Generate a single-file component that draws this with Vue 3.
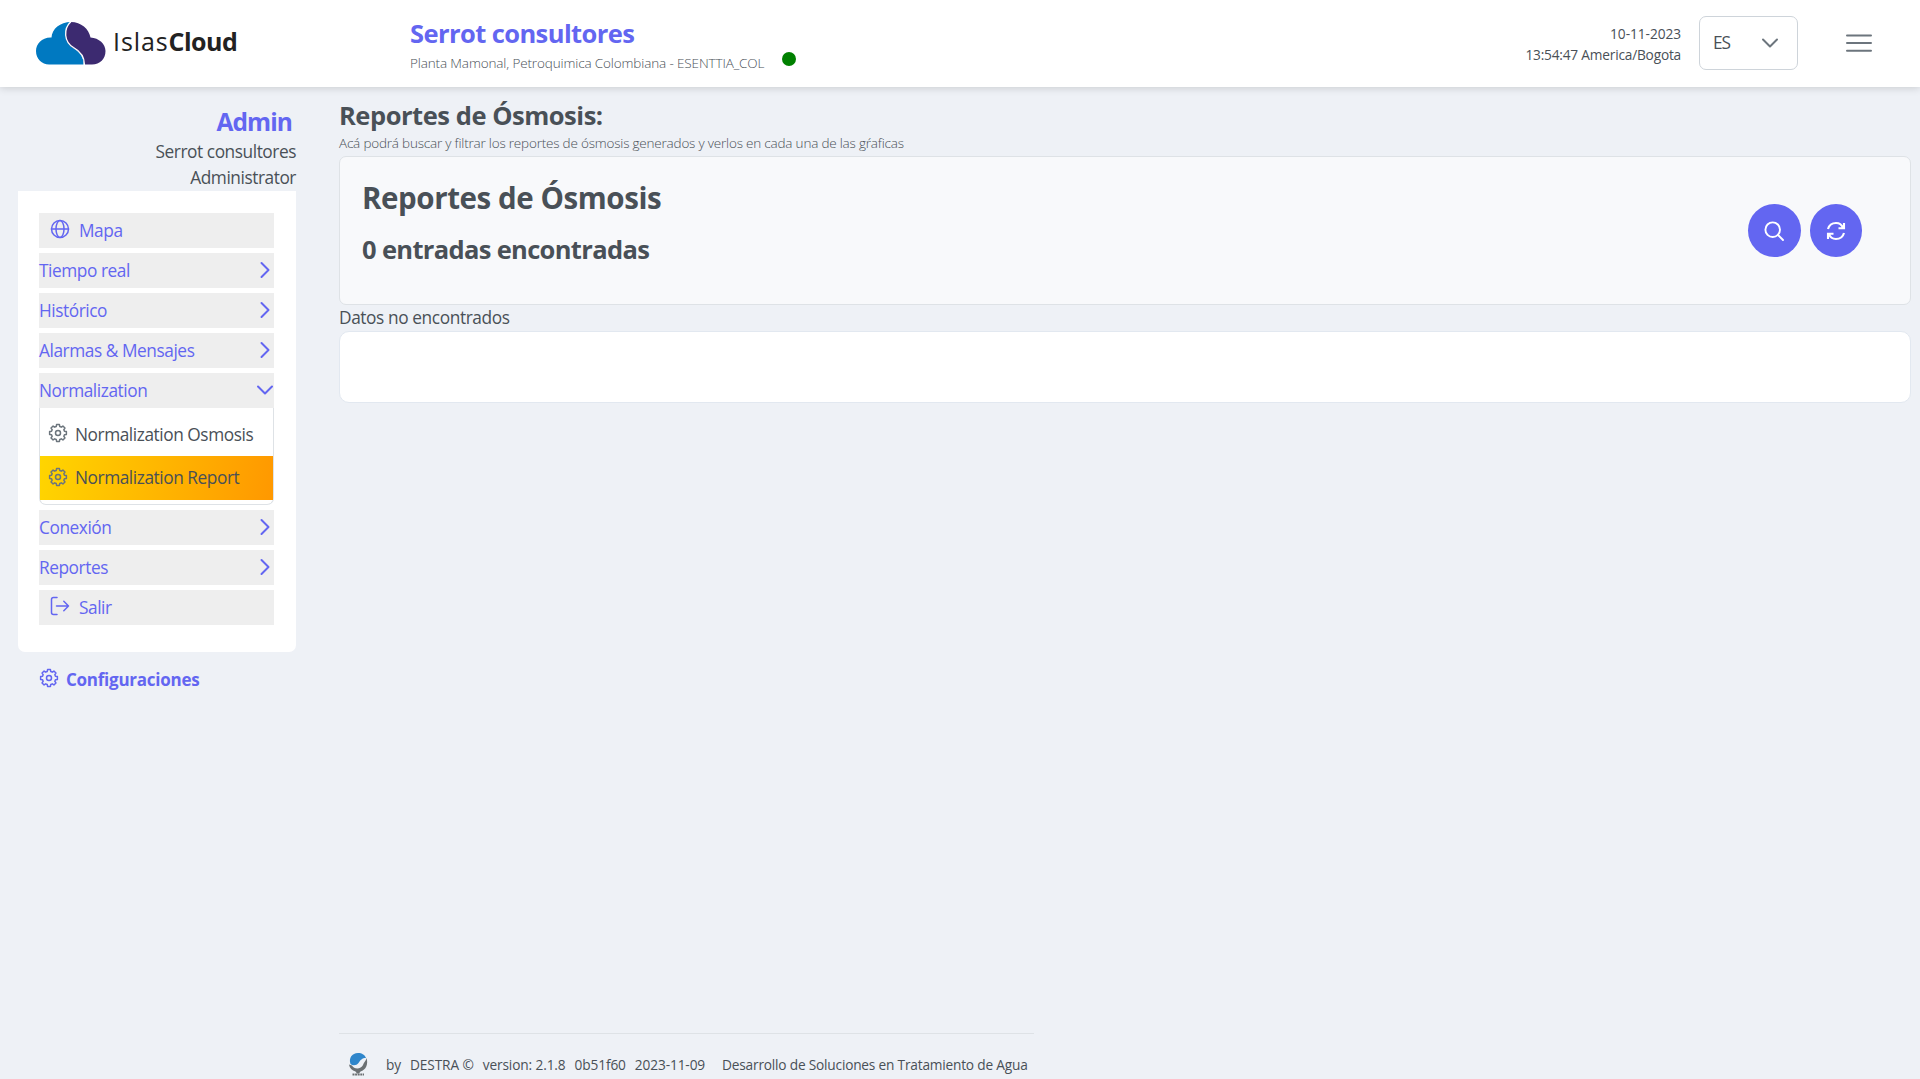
<script setup>
const top = [
  { label: 'Mapa', icon: 'globe' },
  { label: 'Tiempo real' },
  { label: 'Histórico' },
  { label: 'Alarmas & Mensajes' },
  {
    label: 'Normalization',
    open: true,
    children: [
      { label: 'Normalization Osmosis' },
      { label: 'Normalization Report', active: true }
    ]
  },
  { label: 'Conexión' },
  { label: 'Reportes' },
  { label: 'Salir', icon: 'exit' }
]

// Outline of an eight-toothed gear centred in a 20x20 box
const gear = (() => {
  const pts = []
  for (let i = 0; i < 8; i++) {
    const a = (i * Math.PI) / 4
    for (const [d, r] of [[-0.27, 6.7], [-0.17, 8.5], [0.17, 8.5], [0.27, 6.7]]) {
      pts.push(`${(10 + r * Math.sin(a + d)).toFixed(2)} ${(10 - r * Math.cos(a + d)).toFixed(2)}`)
    }
  }
  return `M${pts.join('L')}Z`
})()
</script>

<template>
  <div class="page">
    <header class="topbar">
      <div class="logo">
        <svg width="72" height="46" viewBox="0 0 72 46">
          <path fill="#0079c1" d="M36 2C25 2 17 9 16.500 17.500C7 17 1 24 1 31C1 39 7 44.500 14 44.500H48.500C49 36 43 31 38 28C32 24 27 12 36 2Z" />
          <path fill="#3c2a70" d="M36 2C46 2 54 9 55.500 17.500C64 18 70.500 24 70.500 31C70.500 39 65 44.500 57 44.500H49C49 36 44 31 38 28C29 23 28 9 36 2Z" />
          <path fill="none" stroke="#fff" stroke-width="1.300" d="M36 1.500C28 9 29 22 38.500 27.500C45 31 49.500 36 49.500 45" />
        </svg>
        <span class="logo-text"><span>Islas</span><b>Cloud</b></span>
      </div>
      <div class="company">
        <h1>Serrot consultores</h1>
        <div class="plant">
          <span>Planta Mamonal, Petroquimica Colombiana - ESENTTIA_COL</span>
          <i class="status"></i>
        </div>
      </div>
      <div class="clock">
        <div class="day">10-11-2023</div>
        <div>13:54:47 America/Bogota</div>
      </div>
      <div class="select">
        <span>ES</span>
        <svg width="18" height="18" viewBox="0 0 18 18"><path d="M2 5.500L9 12.500L16 5.500" /></svg>
      </div>
      <svg class="burger" width="28" height="20" viewBox="0 0 28 20"><path d="M2 2.500H26M2 10H26M2 17.700H26" /></svg>
    </header>

    <div class="body">
      <aside>
        <div class="user">
          <h2>Admin</h2>
          <div>Serrot consultores</div>
          <div>Administrator</div>
        </div>
        <nav>
          <div v-for="item in top" :key="item.label" class="group">
            <div class="item" :class="{ link: item.icon }">
              <svg v-if="item.icon === 'globe'" width="20" height="20" viewBox="0 0 20 20">
                <circle cx="10" cy="10" r="8.500" /><ellipse cx="10" cy="10" rx="4" ry="8.500" /><path d="M1.500 10H18.500" />
              </svg>
              <svg v-if="item.icon === 'exit'" width="20" height="20" viewBox="0 0 20 20">
                <path d="M7 1.500H3.500Q1.500 1.500 1.500 3.500V16.500Q1.500 18.500 3.500 18.500H7M6.500 10H18.500M13.800 5.300L18.500 10L13.800 14.700" />
              </svg>
              <span>{{ item.label }}</span>
              <svg v-if="!item.icon" class="chevron" width="18" height="18" viewBox="0 0 18 18">
                <path :d="item.open ? 'M2 5.500L9 12.500L16 5.500' : 'M5.500 2L12.500 9L5.500 16'" />
              </svg>
            </div>
            <div v-if="item.children" class="submenu">
              <div v-for="c in item.children" :key="c.label" class="sub" :class="{ active: c.active }">
                <svg width="20" height="20" viewBox="0 0 20 20"><path :d="gear" /><circle cx="10" cy="10" r="2.500" /></svg>
                <span>{{ c.label }}</span>
              </div>
            </div>
          </div>
        </nav>
        <div class="config">
          <svg width="20" height="20" viewBox="0 0 20 20"><path :d="gear" /><circle cx="10" cy="10" r="2.500" /></svg>
          <span>Configuraciones</span>
        </div>
      </aside>

      <main>
        <h2 class="title">Reportes de Ósmosis:</h2>
        <p class="subtitle">Acá podrá buscar y filtrar los reportes de ósmosis generados y verlos en cada una de las gŕaficas</p>
        <section class="toolbar">
          <div>
            <h2>Reportes de Ósmosis</h2>
            <h3>0 entradas encontradas</h3>
          </div>
          <div class="actions">
            <button>
              <svg width="20" height="20" viewBox="0 0 20 20"><circle cx="8.700" cy="8.700" r="7.300" /><path d="M14 14L19 19" /></svg>
            </button>
            <button>
              <svg class="refresh" width="20" height="20" viewBox="0 0 20 20">
                <path d="M2 8C3 4.500 6 2 10 2C13.500 2 16 4 17 7M18 2V7.300H12.500M18 12C17 15.500 14 18 10 18C6.500 18 4 16 3 13M2 18V12.700H7.500" />
              </svg>
            </button>
          </div>
        </section>
        <p class="empty">Datos no encontrados</p>
        <section class="results"></section>

        <footer>
          <svg width="22" height="25" viewBox="0 0 22 25">
            <path fill="#6b7073" d="M19.500 6C21.500 12 19 18 13.500 19.500L12 21.500H10L8.500 19.500C5 18.500 2.500 16 2 12.500L5 13.500C7 17.500 14 17.500 16 13C17 10 19 9 19.500 6Z" />
            <path fill="#2f86cb" d="M3.500 12C1.500 6 5 1 11 1C15 1 18 3 19 6C15 6 13.500 8 11.500 11C9.500 13.500 6 14 3.500 12Z" />
            <path class="mark" d="M5.500 22.500H17" />
          </svg>
          <span class="by">by</span>
          <span class="destra">DESTRA ©</span>
          <span class="version">version: 2.1.8</span>
          <span class="hash">0b51f60</span>
          <span class="date">2023-11-09</span>
          <span class="tagline">Desarrollo de Soluciones en Tratamiento de Agua</span>
        </footer>
      </main>
    </div>
  </div>
</template>

<style>
body {
  background: #eef1f6;
}
</style>

<style scoped>
* {
  box-sizing: border-box;
}
h1, h2, h3, p {
  margin: 0;
}
.page {
  display: flex;
  flex-direction: column;
  height: 1079px;
  overflow: hidden;
  background: #eef1f6;
  color: #495057;
  font: 400 17.3px/26px "Open Sans", "Noto Sans", sans-serif;
  letter-spacing: -0.44px;
}
svg {
  flex: none;
  fill: none;
  stroke: currentColor;
  stroke-width: 1.5;
  stroke-linecap: round;
  stroke-linejoin: round;
}
.topbar {
  position: relative;
  flex: none;
  display: flex;
  align-items: center;
  height: 87px;
  padding: 0 47px 1px 35px;
  background: #fff;
  box-shadow: 0 1px 8px rgba(0, 0, 0, 0.16);
}
.logo {
  display: flex;
  align-items: center;
  width: 375px;
}
.logo svg {
  stroke: none;
}
.logo-text {
  margin: -4px 0 0 6px;
  color: #222;
  font-size: 25px;
  line-height: 34px;
}
.logo-text span {
  letter-spacing: 0.9px;
}
.logo-text b {
  letter-spacing: -0.5px;
}
.company {
  padding-top: 4px;
}
h1 {
  color: #6366f1;
  font-size: 25.5px;
  line-height: 34px;
  font-weight: 700;
  letter-spacing: -0.58px;
}
.plant {
  display: flex;
  font-size: 13.5px;
  line-height: 22px;
  font-weight: 300;
  letter-spacing: -0.13px;
  padding-top: 2px;
}
.status {
  width: 14px;
  height: 14px;
  margin-left: 18px;
  border-radius: 50%;
  background: #008000;
}
.clock {
  margin-left: auto;
  padding-top: 2px;
  text-align: right;
  font-size: 13.7px;
  line-height: 21px;
  letter-spacing: -0.2px;
}
.day {
  letter-spacing: -0.05px;
}
.select {
  display: flex;
  align-items: center;
  justify-content: space-between;
  width: 99px;
  height: 54px;
  margin-left: 18px;
  padding: 0 18px 0 13px;
  border: 1px solid #ced4da;
  border-radius: 7px;
}
.select span {
  letter-spacing: -1px;
}
.select svg,
.burger {
  color: #6c757d;
  stroke-width: 2;
}
.burger {
  margin-left: 47px;
}
.body {
  flex: 1;
  display: flex;
  min-height: 0;
}
aside {
  width: 339px;
  padding: 17px 43px 0 18px;
}
.user {
  text-align: right;
  height: 87px;
}
.user h2 {
  padding-right: 4px;
  color: #6366f1;
  font-size: 24.5px;
  line-height: 35px;
  font-weight: 700;
  letter-spacing: -0.9px;
}
nav {
  display: flex;
  flex-direction: column;
  gap: 5px;
  height: 461px;
  padding: 22px 22px 0 21px;
  background: #fff;
  border-radius: 0 0 7px 7px;
}
.item {
  display: flex;
  align-items: center;
  justify-content: space-between;
  height: 35px;
  background: #eee;
  color: #6366f1;
}
.item.link {
  justify-content: flex-start;
  gap: 9px;
  padding-left: 11px;
}
.item .chevron {
  stroke-width: 2;
  margin-top: -2px;
}
.item svg {
  margin-top: -3px;
}
.submenu {
  padding: 4.500px 0 4.500px;
  border: 1px solid #dee2e6;
  border-top: 0;
  border-radius: 0 0 7px 7px;
}
.sub {
  display: flex;
  align-items: center;
  gap: 7px;
  height: 43.500px;
  padding: 1px 0 0 8px;
}
.sub svg {
  margin-top: -3px;
  color: #6c757d;
}
.sub.active {
  background: linear-gradient(100deg, #ffd500, #ff9800);
}
.config {
  display: flex;
  align-items: center;
  gap: 7px;
  margin-top: 15px;
  padding-left: 21px;
  color: #6366f1;
  font-size: 17px;
  font-weight: 700;
  letter-spacing: -0.25px;
}
.config svg {
  margin-top: -4px;
}
main {
  flex: 1;
  display: flex;
  flex-direction: column;
  align-items: stretch;
  padding: 11px 9px 0 0;
}
.title {
  font-size: 25.5px;
  line-height: 34px;
  font-weight: 700;
  letter-spacing: -0.46px;
}
.subtitle {
  height: 24px;
  font-size: 13.5px;
  line-height: 22px;
  font-weight: 300;
  letter-spacing: -0.2px;
}
.toolbar {
  display: flex;
  justify-content: space-between;
  height: 149px;
  padding: 21px 48px 0 22px;
  background: #f8f9fb;
  border: 1px solid #dee2e6;
  border-radius: 7px;
}
.toolbar h2 {
  font-size: 29.5px;
  line-height: 40px;
  font-weight: 700;
  letter-spacing: -0.42px;
}
.toolbar h3 {
  margin-top: 14px;
  font-size: 25.5px;
  line-height: 34px;
  font-weight: 700;
  letter-spacing: -0.66px;
}
.actions {
  display: flex;
  gap: 9px;
  padding-top: 26px;
}
.actions button {
  display: flex;
  align-items: center;
  justify-content: center;
  width: 52.500px;
  height: 53px;
  padding: 0;
  border: 0;
  border-radius: 50%;
  background: #6366f1;
  color: #fff;
}
.actions svg {
  stroke-width: 1.9;
}
.actions .refresh {
  stroke-width: 2.1;
  stroke-linecap: butt;
  stroke-linejoin: miter;
}
.empty {
  height: 26px;
  letter-spacing: -0.4px;
}
.results {
  height: 72px;
  background: #fff;
  border: 1px solid #e2e8f0;
  border-radius: 10px;
}
footer {
  display: flex;
  align-items: center;
  width: 695px;
  height: 46px;
  margin-top: auto;
  padding: 16px 0 0 8px;
  border-top: 1px solid #dee2e6;
  font-size: 13.7px;
  line-height: 22px;
  letter-spacing: -0.12px;
  white-space: nowrap;
}
footer svg {
  stroke: none;
  margin-right: 17px;
}
.mark {
  stroke: #6b7073;
  stroke-width: 2;
  stroke-linecap: butt;
  stroke-dasharray: 2 0.6;
}
.by,
.destra,
.version,
.hash {
  margin-right: 9px;
}
.date {
  margin-right: 17px;
}
.tagline {
  letter-spacing: -0.2px;
}
</style>
